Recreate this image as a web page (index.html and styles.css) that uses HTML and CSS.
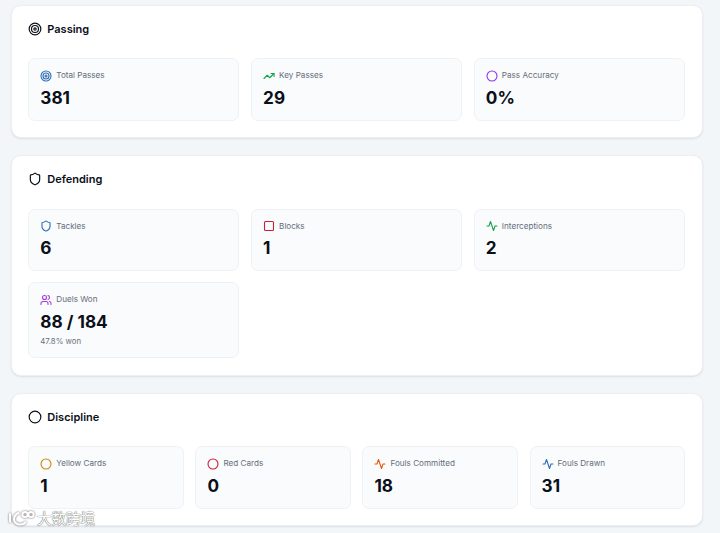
FILE: index.html
```html
<!DOCTYPE html>
<html lang="en">
<head>
<meta charset="utf-8">
<title>Player Stats</title>
<link rel="stylesheet" href="styles.css">
</head>
<body>
<main class="page">
  <section class="panel">
    <h2 class="panel-title">
      <svg class="title-icon" viewBox="0 0 24 24"><circle cx="12" cy="12" r="10"/><circle cx="12" cy="12" r="6"/><circle cx="12" cy="12" r="2"/></svg>
      Passing
    </h2>
    <div class="grid grid-3">
      <div class="stat">
        <div class="label"><svg class="icon blue" viewBox="0 0 24 24"><circle cx="12" cy="12" r="10"/><circle cx="12" cy="12" r="6"/><circle cx="12" cy="12" r="2"/></svg>Total Passes</div>
        <div class="value">381</div>
      </div>
      <div class="stat">
        <div class="label"><svg class="icon green" viewBox="0 0 24 24"><path d="M22 7l-8.5 8.5-5-5L2 17"/><path d="M16 7h6v6"/></svg>Key Passes</div>
        <div class="value">29</div>
      </div>
      <div class="stat">
        <div class="label"><svg class="icon purple" viewBox="0 0 24 24"><circle cx="12" cy="12" r="10"/></svg>Pass Accuracy</div>
        <div class="value">0%</div>
      </div>
    </div>
  </section>

  <section class="panel">
    <h2 class="panel-title">
      <svg class="title-icon" viewBox="0 0 24 24"><path d="M20 13c0 5-3.5 7.5-7.66 8.95a1 1 0 0 1-.67-.01C7.5 20.5 4 18 4 13V6a1 1 0 0 1 1-1c2 0 4.500-1.200 6.240-2.720a1.170 1.170 0 0 1 1.520 0C14.510 3.810 17 5 19 5a1 1 0 0 1 1 1z"/></svg>
      Defending
    </h2>
    <div class="grid grid-3">
      <div class="stat">
        <div class="label"><svg class="icon blue" viewBox="0 0 24 24"><path d="M20 13c0 5-3.500 7.500-7.660 8.950a1 1 0 0 1-.67-.01C7.500 20.500 4 18 4 13V6a1 1 0 0 1 1-1c2 0 4.500-1.200 6.240-2.720a1.170 1.170 0 0 1 1.520 0C14.510 3.810 17 5 19 5a1 1 0 0 1 1 1z"/></svg>Tackles</div>
        <div class="value">6</div>
      </div>
      <div class="stat">
        <div class="label"><svg class="icon red" viewBox="0 0 24 24"><rect x="3" y="3" width="18" height="18" rx="2"/></svg>Blocks</div>
        <div class="value">1</div>
      </div>
      <div class="stat">
        <div class="label"><svg class="icon green" viewBox="0 0 24 24"><path d="M22 12h-4l-3 9L9 3l-3 9H2"/></svg>Interceptions</div>
        <div class="value">2</div>
      </div>
      <div class="stat">
        <div class="label"><svg class="icon violet" viewBox="0 0 24 24"><path d="M16 21v-2a4 4 0 0 0-4-4H6a4 4 0 0 0-4 4v2"/><circle cx="9" cy="7" r="4"/><path d="M22 21v-2a4 4 0 0 0-3-3.870"/><path d="M16 3.130a4 4 0 0 1 0 7.750"/></svg>Duels Won</div>
        <div class="value">88 / 184</div>
        <div class="sub">47.8% won</div>
      </div>
    </div>
  </section>

  <section class="panel">
    <h2 class="panel-title">
      <svg class="title-icon" viewBox="0 0 24 24"><circle cx="12" cy="12" r="10"/></svg>
      Discipline
    </h2>
    <div class="grid grid-4">
      <div class="stat">
        <div class="label"><svg class="icon amber" viewBox="0 0 24 24"><circle cx="12" cy="12" r="10"/></svg>Yellow Cards</div>
        <div class="value">1</div>
      </div>
      <div class="stat">
        <div class="label"><svg class="icon red" viewBox="0 0 24 24"><circle cx="12" cy="12" r="10"/></svg>Red Cards</div>
        <div class="value">0</div>
      </div>
      <div class="stat">
        <div class="label"><svg class="icon orange" viewBox="0 0 24 24"><path d="M22 12h-4l-3 9L9 3l-3 9H2"/></svg>Fouls Committed</div>
        <div class="value">18</div>
      </div>
      <div class="stat">
        <div class="label"><svg class="icon blue" viewBox="0 0 24 24"><path d="M22 12h-4l-3 9L9 3l-3 9H2"/></svg>Fouls Drawn</div>
        <div class="value">31</div>
      </div>
    </div>
  </section>
</main>
<div class="watermark">
  <svg class="wm-logo" viewBox="0 0 27 16"><path d="M2 3v9"/><path d="M11 2C7 4 6 7 6 9c0 3 3 5 6 5 3 0 5-1 6-3"/><circle cx="17" cy="4" r="2.600"/><circle cx="23" cy="4" r="2.600"/></svg>
  <span class="wm-text">大数跨境</span>
</div>
</body>
</html>
```

FILE: styles.css
```css
* {
  box-sizing: border-box;
}

html,
body {
  margin: 0;
  height: 100%;
}

body {
  position: relative;
  overflow: hidden;
  background: #f2f6f9;
  font-family: Inter, "Liberation Sans", sans-serif;
  color: #0f172a;
}

.page {
  display: flex;
  flex-direction: column;
  gap: 17px;
  padding: 4.700px 17.400px 0 11px;
}

.panel {
  padding: 16px 16.700px 16.200px 16.300px;
  background: #fff;
  border: 1px solid #eceff3;
  border-radius: 10px;
  box-shadow: 0 1px 2px rgba(15, 23, 42, 0.1);
}

.panel-title {
  display: flex;
  align-items: center;
  gap: 5px;
  height: 14px;
  margin: 0 0 22.600px;
  font-size: 11px;
  font-weight: 600;
  line-height: 14px;
  color: #0b0f19;
}

.title-icon {
  flex: none;
  width: 14px;
  height: 14px;
  fill: none;
  stroke: #0b0f19;
  stroke-width: 2;
  stroke-linecap: round;
  stroke-linejoin: round;
}

.grid {
  display: grid;
  gap: 11.400px 11.700px;
}

.grid-3 {
  grid-template-columns: repeat(3, 1fr);
}

.grid-4 {
  grid-template-columns: repeat(4, 1fr);
}

.stat {
  min-height: 62.500px;
  padding: 11px 11px 10px;
  background: #f9fbfc;
  border: 1px solid #eff2f5;
  border-radius: 7px;
}

.label {
  display: flex;
  align-items: center;
  gap: 4px;
  height: 11px;
  font-size: 8.150px;
  line-height: 11px;
  color: #656d7b;
}

.icon {
  flex: none;
  width: 12px;
  height: 12px;
  fill: none;
  stroke-width: 2.200;
  stroke-linecap: round;
  stroke-linejoin: round;
}

.blue {
  stroke: #2f6fb5;
}

.green {
  stroke: #16a34a;
}

.purple {
  stroke: #9333ea;
}

.red {
  stroke: #c8203c;
}

.violet {
  stroke: #a63fd8;
}

.amber {
  stroke: #ca8a04;
}

.orange {
  stroke: #ea580c;
}

.value {
  margin-top: 5.700px;
  font-size: 17.200px;
  font-weight: 700;
  line-height: 22px;
  color: #0b0f19;
}

.sub {
  margin-top: 3.300px;
  font-size: 7.800px;
  line-height: 11px;
  color: #6b7280;
}

.watermark {
  position: absolute;
  left: 8px;
  top: 509px;
  display: flex;
  align-items: center;
  gap: 2px;
}

.wm-logo {
  width: 27px;
  height: 17px;
  fill: none;
  stroke: #fff;
  stroke-width: 2;
  filter: drop-shadow(0 0 1px #666);
}

.wm-text {
  font-family: "Noto Sans CJK SC", sans-serif;
  font-size: 14.500px;
  line-height: 18px;
  color: #fff;
  text-shadow: 0 0 1px #555, 0 0 1px #777;
}
```
